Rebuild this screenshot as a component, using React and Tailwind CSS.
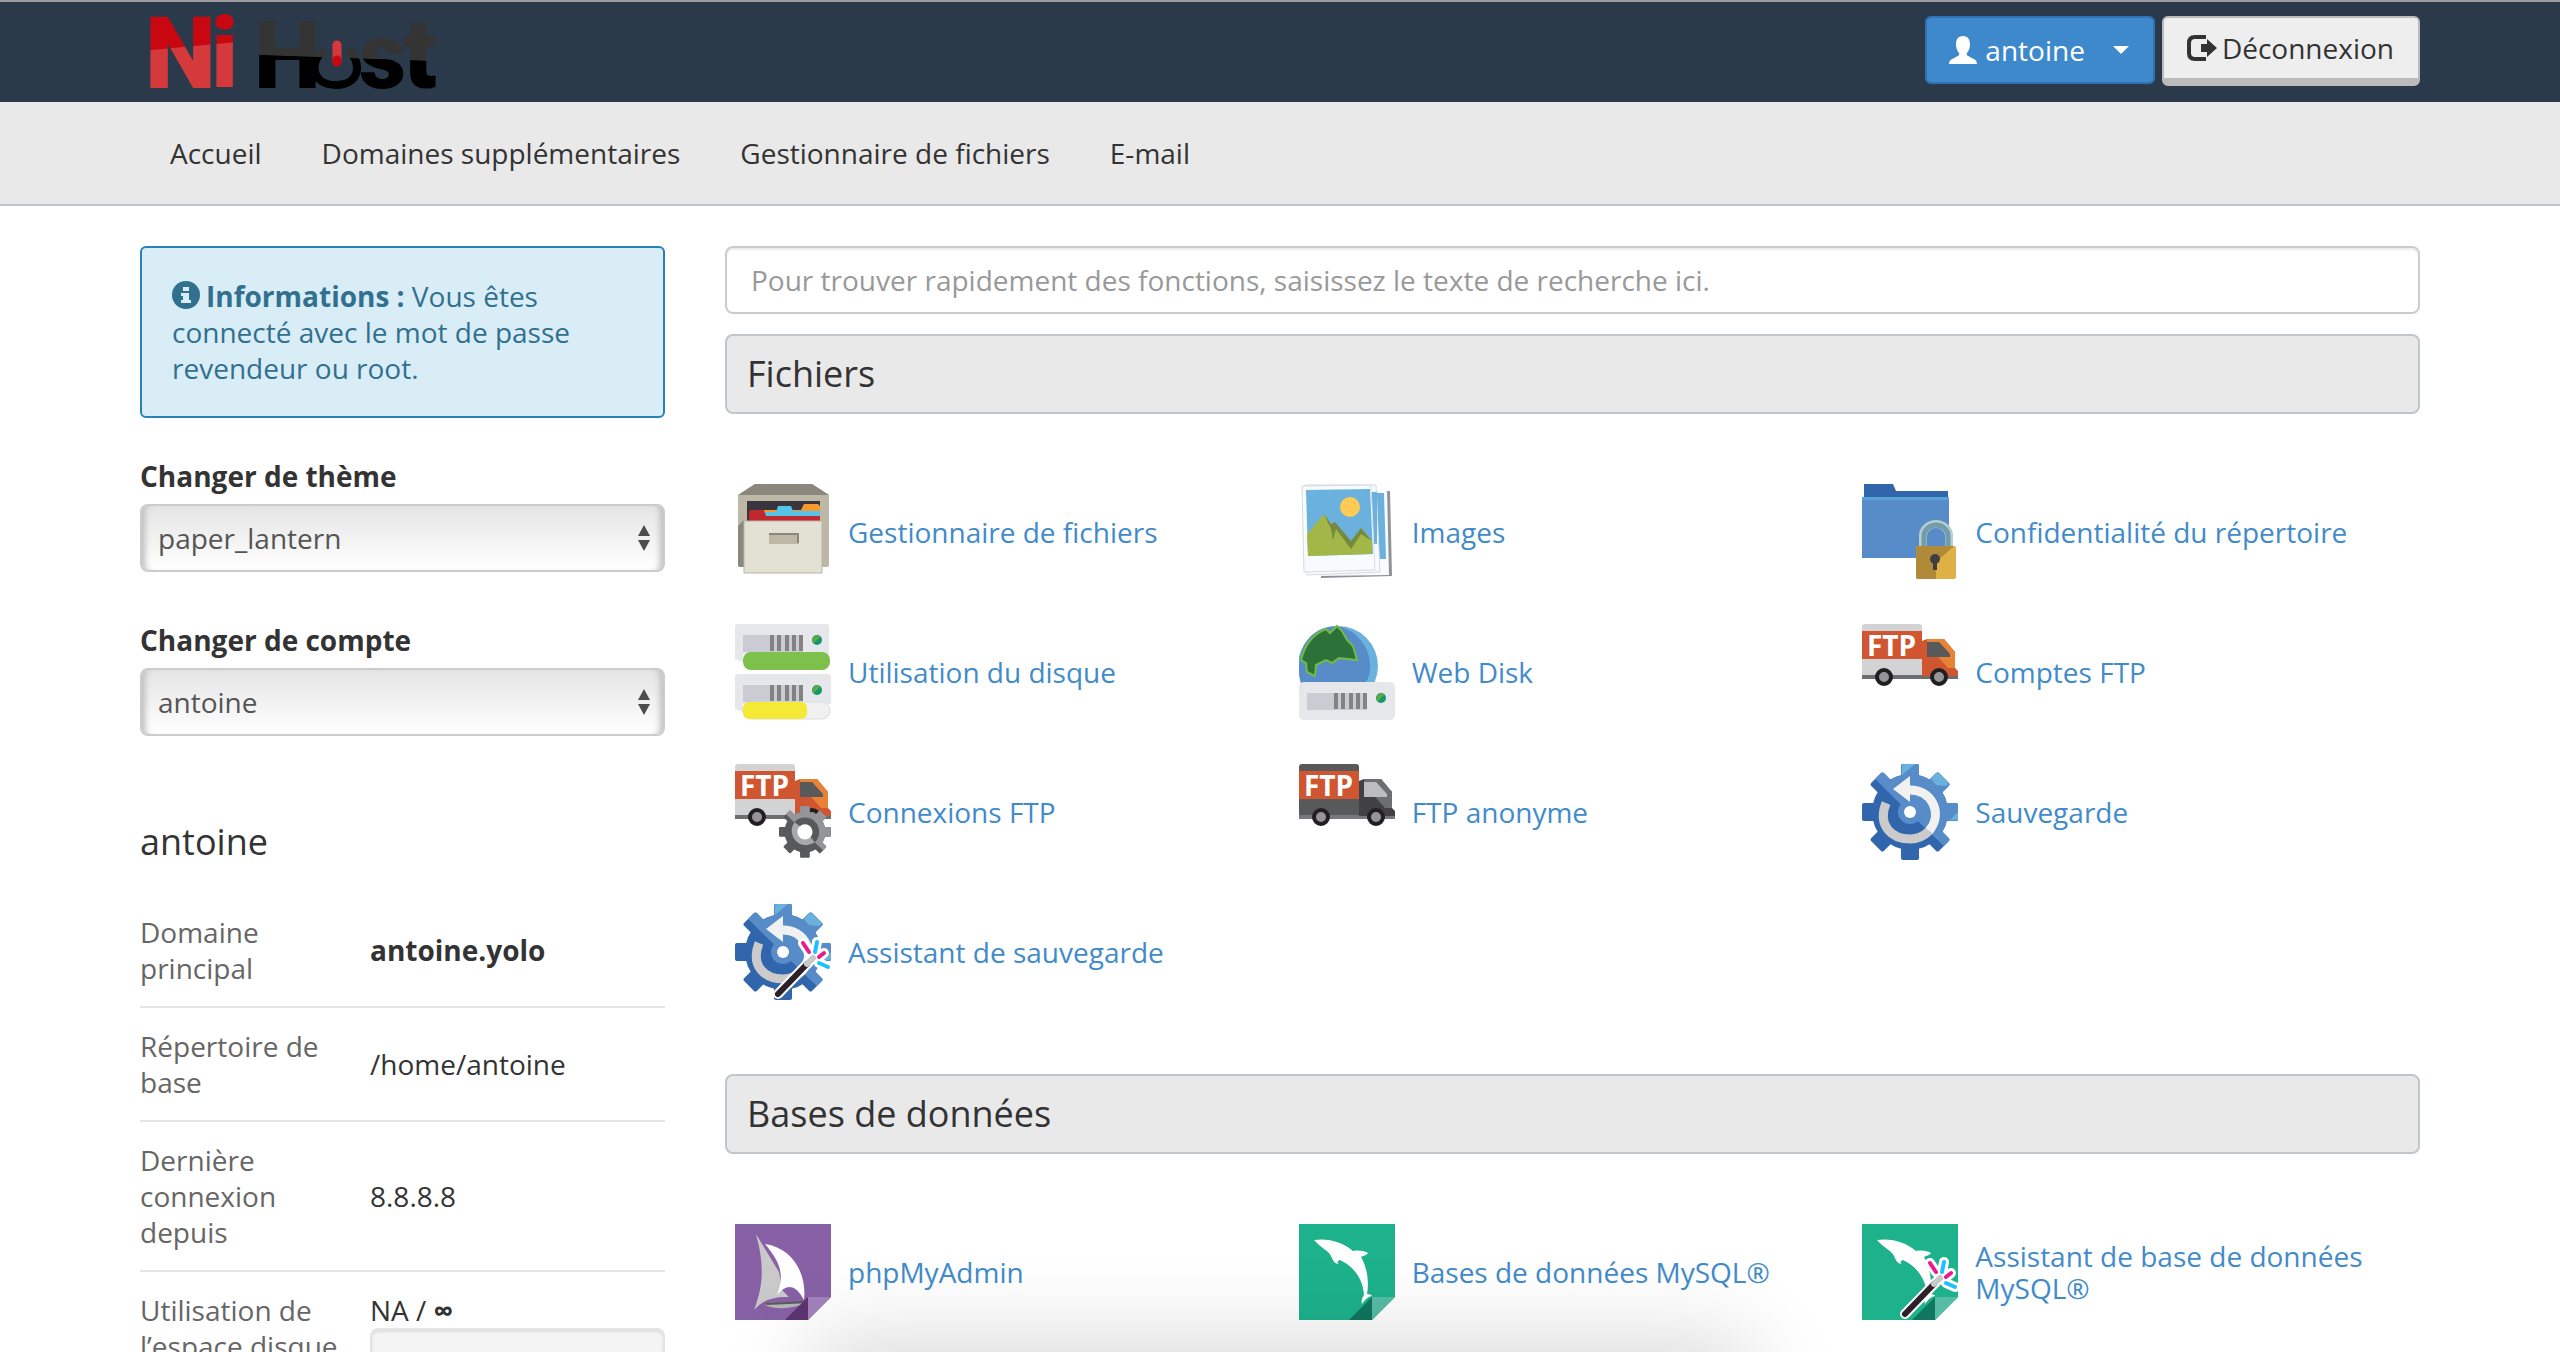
import React, { useId } from 'react';

/* ---------- Logo ---------- */

function Logo() {
  return (
    <svg viewBox="0 0 300 86" className="h-[86px] w-[300px] overflow-visible" role="img" aria-label="Ni Host">
      <defs>
        <linearGradient id="logo-red" gradientUnits="userSpaceOnUse" x1="0" y1="0" x2="8" y2="86">
          <stop offset="0.48" stopColor="#c90711" />
          <stop offset="0.49" stopColor="#d6393c" />
        </linearGradient>
        <linearGradient id="logo-black" gradientUnits="userSpaceOnUse" x1="0" y1="0" x2="-3" y2="86">
          <stop offset="0.48" stopColor="#343434" />
          <stop offset="0.49" stopColor="#000000" />
        </linearGradient>
      </defs>
      <g className="font-['Roboto',sans-serif] font-black">
        <text x="5" y="79" fontSize="101" fill="url(#logo-red)">N</text>
        <text x="71" y="79" fontSize="99" fill="url(#logo-red)">i</text>
        <text x="114" y="79" fontSize="95" fill="url(#logo-black)">H</text>
        <text x="219" y="79" fontSize="92" fill="url(#logo-black)">s</text>
        <text x="263" y="79" fontSize="98" fill="url(#logo-black)">t</text>
      </g>
      <path d="M184 41 C169 52 171 76 196 76 C221 76 222 52 208 41" fill="none" stroke="url(#logo-black)" strokeWidth="8" />
      <path d="M197 36 V51" stroke="#d6393c" strokeWidth="9" strokeLinecap="round" />
      <path d="M197 51 V53" stroke="#c90711" strokeWidth="9" strokeLinecap="round" />
    </svg>
  );
}

/* ---------- Small glyphs ---------- */

function UserGlyph() {
  return (
    <svg viewBox="0 0 28 28" className="size-7" fill="currentColor" aria-hidden="true">
      <path d="M14 0c-5 0-7 3.500-7 8.500 0 4 1.500 6.500 3 8.500 1 2-1 3-3 4C3 23 0 24 0 28h28c0-4-3-5-7-7-2-1-4-2-3-4 1.500-2 3-4.500 3-8.500C21 3.500 19 0 14 0z" />
    </svg>
  );
}

function LogoutGlyph() {
  return (
    <svg viewBox="0 0 30 26" className="h-[26px] w-[30px]" aria-hidden="true">
      <path d="M19 2H8Q2 2 2 8V18Q2 24 8 24H19" fill="none" stroke="currentColor" strokeWidth="4" />
      <path d="M14 9H20V4L30 13L20 22V17H14Z" fill="currentColor" />
    </svg>
  );
}

function InfoGlyph() {
  return (
    <svg viewBox="0 0 28 28" className="mr-1.5 inline size-7 align-[-2px]" aria-hidden="true">
      <circle cx="14" cy="14" r="14" fill="#31708f" />
      <path d="M11 6h6v4h-6zM9 12h8v7h2v3H9v-3h2v-4H9z" fill="#d9edf7" />
    </svg>
  );
}

/* ---------- Feature icons ---------- */

function Icon({ children }) {
  return (
    <svg viewBox="0 0 96 96" className="size-24 shrink-0" aria-hidden="true">
      {children}
    </svg>
  );
}

function CabinetIcon() {
  return (
    <Icon>
      <path d="M20 0H77L94 11V81Q94 83 92 83H5Q3 83 3 81V11Z" fill="#bcb8a5" />
      <path d="M20 0H77L94 11H3Z" fill="#8b877d" />
      <path d="M3 42L9 36V83H5Q3 83 3 81Z" fill="#8b877d" />
      <rect x="12" y="17" width="73" height="21" fill="#39353f" />
      <path d="M29 26H66L69 20H83L85 22V30H29Z" fill="#f7992f" />
      <path d="M30 28H41L43 22H56L58 27H85V32H30Z" fill="#54c4e9" />
      <path d="M14 28L16 26H29L31 32H85V38H14Z" fill="#c1272f" />
      <rect x="9" y="37" width="78" height="52" fill="#e3e0d4" stroke="#b9b6a8" strokeWidth="1" />
      <rect x="34" y="49" width="30" height="11" fill="#bcb8a5" />
      <path d="M34 50H63V59" fill="none" stroke="#8b877d" strokeWidth="2" />
    </Icon>
  );
}

function ServerFace({ y }) {
  return (
    <g>
      <rect x="8" y={y} width="60" height="17" fill="#cacbd3" />
      {[35, 42, 50, 57, 64].map((x) => (
        <rect key={x} x={x} y={y} width="4" height="16" fill="#838383" />
      ))}
      <circle cx="82" cy={y + 5} r="5" fill="#12986a" />
      <path d={`M78.500 ${y + 8.5}A5 5 0 0 1 85.500 ${y + 1.5}Z`} fill="#5fa945" />
    </g>
  );
}

function DiskUsageIcon() {
  return (
    <Icon>
      <path d="M3 0H92Q94 0 94 3V30H8V38L0 35V3Q0 0 3 0Z" fill="#e5e7ea" />
      <ServerFace y={11} />
      <rect x="8" y="28" width="87" height="18" rx="8" fill="#7dc04c" />
      <path d="M3 50H93Q96 50 96 53V80H8V88L0 85V53Q0 50 3 50Z" fill="#e5e7ea" />
      <ServerFace y={61} />
      <rect x="8" y="78" width="87" height="17" rx="8" fill="#f0f0f0" stroke="#dddddd" strokeWidth="1" />
      <rect x="8" y="78" width="64" height="17" rx="6" fill="#f4e935" />
    </Icon>
  );
}

function Truck({ dark }) {
  const cargo = dark ? '#58595b' : '#d1d3d5';
  return (
    <g>
      <path d="M3 0H57Q60 0 60 3V52H0V3Q0 0 3 0Z" fill={cargo} />
      <rect x="0" y="7" width="60" height="28" fill="#cf5630" />
      <text x="5" y="32" fontSize="28" className="font-['Open_Sans',sans-serif] font-bold" fill="#ffffff">FTP</text>
      <rect x="0" y="51" width="96" height="4" fill={dark ? '#77787b' : '#6d6e70'} />
      <path d="M60 17L65 15H82L93 28V44L96 47V52H60Z" fill={dark ? '#414042' : '#cf5630'} />
      <path d="M65 15H82L93 28V44H86L76 33H65Z" fill={dark ? '#6d6e70' : '#e88234'} />
      <path d="M65 18H77L88 30V33H65Z" fill={dark ? '#bcbdc0' : '#58595b'} />
      <circle cx="22" cy="53" r="7" fill="#939598" stroke="#231f20" strokeWidth="4" />
      <circle cx="77" cy="53" r="7" fill="#939598" stroke="#231f20" strokeWidth="4" />
    </g>
  );
}

function GearShape({ fill }) {
  return (
    <g fill={fill}>
      <circle cx="48" cy="48" r="38" />
      {[0, 45, 90, 135].map((angle) => (
        <rect key={angle} x="39" y="0" width="18" height="96" rx="2" transform={`rotate(${angle} 48 48)`} />
      ))}
    </g>
  );
}

function Gear({ dark, light }) {
  const id = useId();
  return (
    <g>
      <clipPath id={id}>
        <path d="M0 6L8 10L92 92H96V0H0Z" />
      </clipPath>
      <GearShape fill={dark} />
      <g clipPath={`url(#${id})`}>
        <GearShape fill={light} />
      </g>
    </g>
  );
}

function FtpConnectionsIcon() {
  return (
    <Icon>
      <Truck />
      <g transform="translate(44 42) scale(0.54)">
        <Gear dark="#58595b" light="#939598" />
        <circle cx="48" cy="48" r="20" fill="none" stroke="#58595b" strokeWidth="13" />
        <path d="M34 34A20 20 0 0 0 62 62" fill="none" stroke="#a7a9ac" strokeWidth="13" />
        <circle cx="48" cy="48" r="14" fill="#ffffff" />
      </g>
    </Icon>
  );
}

function BackupGear() {
  return (
    <g>
      <Gear dark="#3166ad" light="#578cc8" />
      <path d="M40 11V2Q40 0 42 0H53ZM69 15L74 9L78 10L86 18V21L82 22L74 21ZM88 56L96 48V54Q96 56 94 56Z" fill="#6ab1de" />
      <circle cx="48" cy="48" r="12" fill="#578cc8" />
      <path d="M24 39C15 62 30 75 48 75Q59 75 67 67" fill="none" stroke="#cbcbcb" strokeWidth="9" />
      <path d="M67 67C82 49 69 25 47 26" fill="none" stroke="#f1f1f2" strokeWidth="9" />
      <path d="M31 25L48 12V38Z" fill="#f1f1f2" />
      <circle cx="48" cy="48" r="6" fill="#ffffff" />
    </g>
  );
}

function Wand() {
  return (
    <g fill="none" strokeLinecap="round">
      <path d="M43 90L79 53M68 39L74 48M82 38L80 48M84 53L89 49M84 59L93 63" stroke="#ffffff" strokeWidth="10" />
      <path d="M43 90L72 60" stroke="#2d2028" strokeWidth="6" />
      <path d="M72 60L78 54" stroke="#c8c8c8" strokeWidth="6" />
      <path d="M68 39L74 48M84 53L89 49" stroke="#ec1b8d" strokeWidth="4" />
      <path d="M82 38L80 48M84 59L93 63" stroke="#1fc0ff" strokeWidth="4" />
    </g>
  );
}

function ImagesIcon() {
  return (
    <Icon>
      <path d="M20 6L91 7L93 92L22 94Z" fill="#8f9399" />
      <path d="M20 4L88 6L90 91L20 92Z" fill="#f7fbfd" />
      <path d="M78 9H85L87 75H79Z" fill="#6ab1de" />
      <path d="M6 1L77 1L81 88L8 91Z" fill="#f7fbfd" stroke="#d5dadf" strokeWidth="1" />
      <path d="M70 8H78V60H70Z" fill="#6ab1de" />
      <path d="M3 2L72 1L76 86L5 88Z" fill="#f7fbfd" stroke="#d5dadf" strokeWidth="1" />
      <path d="M7 6L71 5L74 70L9 72Z" fill="#6ab1de" />
      <circle cx="51" cy="23" r="10" fill="#ffcb55" />
      <path d="M8 50L25 30L33 42L36 39L52 58L62 44L73 57V70L9 72Z" fill="#a3b648" />
      <path d="M25 30L32 40L36 38L52 57L62 44L73 57L62 50L52 65L37 45L34 56L32 45Z" fill="#76893c" />
    </Icon>
  );
}

function WebDiskIcon() {
  return (
    <Icon>
      <circle cx="39" cy="42" r="40" fill="#6ab1de" />
      <path d="M39 2C78 12 76 60 62 60H2C-6 30 8 2 39 2Z" fill="#578cc8" />
      <path d="M2 36C6 20 14 10 27 5L31 9L38 2L43 7L48 16L54 22L58 36L40 34L33 39L27 36L17 41L16 52L8 48L7 39Z" fill="#2c7238" stroke="#72bb45" strokeWidth="2" />
      <rect x="0" y="58" width="96" height="38" rx="5" fill="#e5e7ea" />
      <ServerFace y={69} />
    </Icon>
  );
}

function PrivacyIcon() {
  return (
    <Icon>
      <path d="M2 0H31L34 7H86V16H2Z" fill="#3166ad" />
      <rect x="0" y="13" width="87" height="61" fill="#578cc8" />
      <rect x="0" y="13" width="87" height="3" fill="#5aa3d6" />
      <path d="M61 62V52A13 12 0 0 1 87 52V62" fill="none" stroke="#b3cdd0" strokeWidth="8" />
      <path d="M62 62V52A12 11 0 0 1 86 52V62" fill="none" stroke="#729da8" strokeWidth="5" />
      <rect x="54" y="62" width="40" height="33" rx="2" fill="#dfb045" />
      <path d="M56 62H92L74 78V95H56Q54 95 54 93V64Q54 62 56 62Z" fill="#b08a38" />
      <circle cx="73" cy="75" r="5" fill="#3f3e40" />
      <path d="M71 77H75V86H71Z" fill="#3f3e40" />
    </Icon>
  );
}

function Page({ base, shade, fold, children }) {
  return (
    <g>
      <path d="M0 0H96V73L73 96H0Z" fill={base} />
      {children}
      <path d="M50 96L73 73V96Z" fill={shade} />
      <path d="M73 73H96L73 96Z" fill={fold} />
    </g>
  );
}

function PhpMyAdminIcon() {
  return (
    <Icon>
      <Page base="#8760a6" shade="#5b3371" fold="#a282bd">
        <path d="M21 10C29 40 29 60 19 86Q30 72 54 73L47 66L44 48Z" fill="#c9c9c9" />
        <path d="M30 20C58 24 72 50 69 76Q57 53 42 71C50 50 45 38 30 20Z" fill="#ffffff" />
        <path d="M29 79L74 78Q50 88 32 82Z" fill="#b5b5b5" />
        <path d="M29 79L74 77V79L32 81Z" fill="#5a5a5a" />
      </Page>
    </Icon>
  );
}

function DolphinPage() {
  return (
    <Page base="#1db28c" shade="#0f765f" fold="#56bca5">
      <path d="M15 16C30 14 43 18 54 27C60 26 66 27 69 29C68 31 64 32 62 33C69 45 70 60 68 70C71 70 73 71 73 72C68 73 66 76 63 80C62 77 63 74 65 71C64 56 56 43 41 36C38 37 38 39 40 40C36 40 34 37 32 32C30 27 22 24 15 16Z" fill="#ffffff" />
    </Page>
  );
}

/* ---------- Data ---------- */

const navLinks = ['Accueil', 'Domaines supplémentaires', 'Gestionnaire de fichiers', 'E-mail'];

const sections = [
  {
    title: 'Fichiers',
    items: [
      { label: 'Gestionnaire de fichiers', icon: <CabinetIcon /> },
      { label: 'Images', icon: <ImagesIcon /> },
      { label: 'Confidentialité du répertoire', icon: <PrivacyIcon /> },
      { label: 'Utilisation du disque', icon: <DiskUsageIcon /> },
      { label: 'Web Disk', icon: <WebDiskIcon /> },
      { label: 'Comptes FTP', icon: <Icon><Truck /></Icon> },
      { label: 'Connexions FTP', icon: <FtpConnectionsIcon /> },
      { label: 'FTP anonyme', icon: <Icon><Truck dark /></Icon> },
      { label: 'Sauvegarde', icon: <Icon><BackupGear /></Icon> },
      { label: 'Assistant de sauvegarde', icon: <Icon><BackupGear /><Wand /></Icon> },
    ],
  },
  {
    title: 'Bases de données',
    items: [
      { label: 'phpMyAdmin', icon: <PhpMyAdminIcon /> },
      { label: 'Bases de données MySQL®', icon: <Icon><DolphinPage /></Icon> },
      { label: 'Assistant de base de données MySQL®', icon: <Icon><DolphinPage /><Wand /></Icon> },
    ],
  },
];

const stats = [
  { label: 'Domaine principal', value: <strong>antoine.yolo</strong> },
  { label: 'Répertoire de base', value: '/home/antoine' },
  { label: 'Dernière connexion depuis', value: '8.8.8.8' },
];

/* ---------- Layout pieces ---------- */

function SelectField({ id, label, value }) {
  return (
    <div>
      <label htmlFor={id} className="block font-bold">{label}</label>
      <div className="relative mt-2.5">
        <select
          id={id}
          defaultValue={value}
          className="h-[68px] w-full appearance-none rounded-lg border-2 border-[#cccccc] bg-linear-to-b from-[#e5e5e5] to-white px-4 text-[#555555] shadow-[inset_8px_0_6px_-5px_#bdbdbd,inset_-8px_0_6px_-5px_#bdbdbd]"
        >
          <option>{value}</option>
        </select>
        <svg viewBox="0 0 12 26" className="pointer-events-none absolute top-[21px] right-[15px] h-[26px] w-3" fill="#4d4d4d" aria-hidden="true">
          <path d="M6 0L12 11H0ZM6 26L12 15H0Z" />
        </svg>
      </div>
    </div>
  );
}

function Section({ title, items }) {
  return (
    <section>
      <h2 className="flex h-20 items-center rounded-lg border-2 border-[#c1c6ca] bg-[#e9e9e9] px-5 text-4xl">{title}</h2>
      <ul className="mr-1 grid grid-cols-3 gap-y-11 pt-[70px] pb-[74px]">
        {items.map((item) => (
          <li key={item.label} className="pl-2.5">
            <a href="#" className="flex items-center gap-[17px] leading-8 text-[#428bca]">
              {item.icon}
              <span>{item.label}</span>
            </a>
          </li>
        ))}
      </ul>
    </section>
  );
}

export default function App() {
  return (
    <div className="relative h-screen overflow-hidden bg-white font-['Open_Sans','Noto_Sans',sans-serif] text-[28px] leading-9 text-[#333333]">
      <header className="border-t-2 border-[#9f9da3] bg-[#2b3a4a]">
        <div className="mx-auto flex h-[100px] max-w-[2280px] items-start justify-between">
          <div className="pt-[7px]"><Logo /></div>
          <div className="flex items-start gap-[7px] pt-3.5">
            <button className="flex h-[68px] items-center gap-2 rounded-md border-2 border-[#2d72b3] bg-[#3e89cb] pr-6 pl-[22px] text-white">
              <UserGlyph />
              <span>antoine</span>
              <svg viewBox="0 0 16 8" className="ml-5 h-2 w-4" fill="currentColor" aria-hidden="true">
                <path d="M0 0H16L8 8Z" />
              </svg>
            </button>
            <button className="flex h-[70px] items-center gap-[5px] rounded-md border-2 border-b-8 border-[#bbbbbb] bg-[#eeeeee] px-6 pl-[23px]">
              <LogoutGlyph />
              Déconnexion
            </button>
          </div>
        </div>
      </header>

      <nav className="border-b-2 border-[#c1c6ca] bg-[#e9e9e9]">
        <ul className="mx-auto flex h-[102px] max-w-[2280px] items-center">
          {navLinks.map((link) => (
            <li key={link}>
              <a href="#" className="block px-[30px]">{link}</a>
            </li>
          ))}
        </ul>
      </nav>

      <div className="mx-auto grid max-w-[2280px] grid-cols-[525fr_1695fr] gap-[60px] pt-10">
        <aside>
          <div className="rounded-md border-2 border-[#2a80b9] bg-[#d9edf7] p-[30px] text-[#31708f]">
            <InfoGlyph />
            <strong>Informations :</strong> Vous êtes connecté avec le mot de passe revendeur ou root.
          </div>

          <div className="mt-10 flex flex-col gap-[50px]">
            <SelectField id="theme" label="Changer de thème" value="paper_lantern" />
            <SelectField id="account" label="Changer de compte" value="antoine" />
          </div>

          <h3 className="mt-[82px] text-4xl leading-[48px]">antoine</h3>

          <table className="mt-7 w-full table-fixed">
            <tbody>
              {stats.map((stat) => (
                <tr key={stat.label} className="border-b-2 border-[#e5e5e5]">
                  <th scope="row" className="w-[230px] py-5 pr-6 text-left font-normal text-[#666666]">{stat.label}</th>
                  <td className="py-5">{stat.value}</td>
                </tr>
              ))}
              <tr>
                <th scope="row" className="w-[230px] py-5 pr-6 text-left align-top font-normal text-[#666666]">
                  Utilisation de l’espace disque
                </th>
                <td className="py-5 align-top">
                  NA / <span className="font-bold">∞</span>
                  <div className="h-10 rounded-lg border-2 border-[#e4e4e4] bg-[#f4f4f4] shadow-[inset_0_2px_3px_#dddddd]" />
                </td>
              </tr>
            </tbody>
          </table>
        </aside>

        <main>
          <input
            type="text"
            aria-label="Recherche"
            placeholder="Pour trouver rapidement des fonctions, saisissez le texte de recherche ici."
            className="mb-5 block h-[68px] w-full rounded-lg border-2 border-[#cccccc] px-6 shadow-[inset_0_2px_2px_rgba(0,0,0,0.075)] placeholder:text-[#999999]"
          />
          {sections.map((section) => (
            <Section key={section.title} {...section} />
          ))}
        </main>
      </div>

      {/* Shadow rising from below the window's edge */}
      <div className="pointer-events-none absolute top-full left-[32%] h-20 w-[36%] shadow-[0_0_90px_10px_rgba(0,0,0,0.16)]" />
    </div>
  );
}
